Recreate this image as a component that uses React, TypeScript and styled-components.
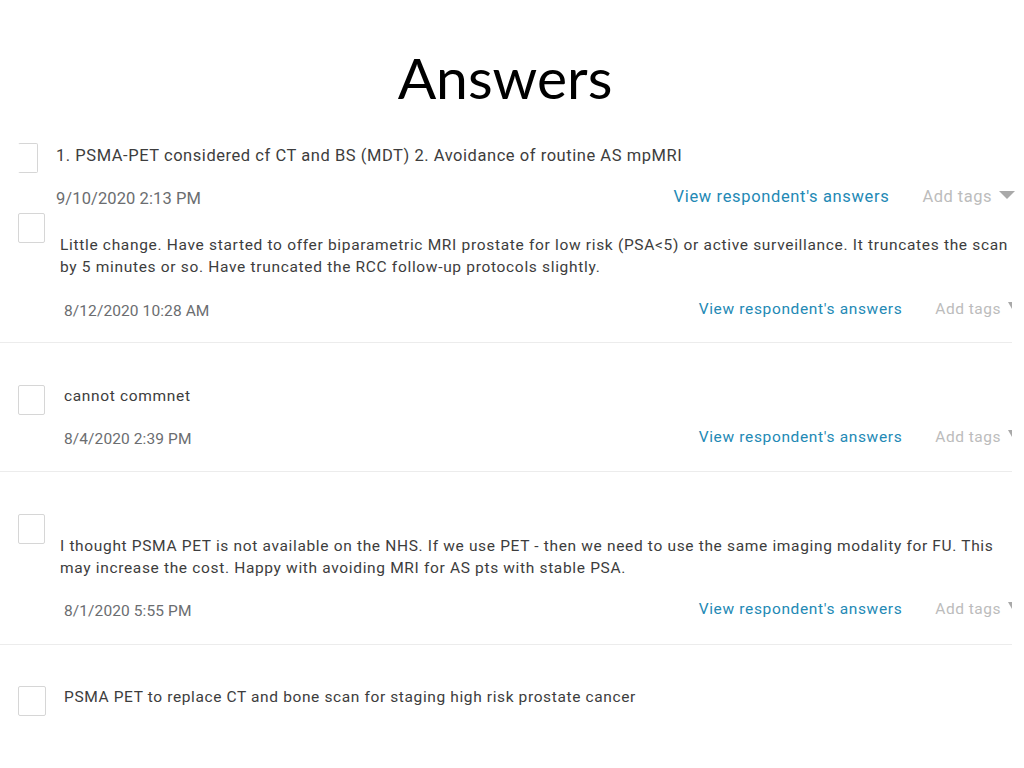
import styled, {createGlobalStyle} from 'styled-components';
import React from 'react';

const answers = [
    {
        lines: ['1. PSMA-PET considered cf CT and BS (MDT) 2. Avoidance of routine AS mpMRI'],
        date: '9/10/2020 2:13 PM',
        height: 80, divider: false, size: 16.5, track: 0.55, cut: true,
        boxTop: 13, boxW: 20, textTop: 15, textLeft: 18, footGap: 20, dateLeft: 0, right: 9,
    },
    {
        lines: [
            'Little change. Have started to offer biparametric MRI prostate for low risk (PSA<5) or active surveillance. It truncates the scan',
            'by 5 minutes or so. Have truncated the RCC follow-up protocols slightly.',
        ],
        date: '8/12/2020 10:28 AM',
        height: 133, divider: true, size: 15.5, track: 0.68, cut: false,
        boxTop: 3, boxW: 27, textTop: 24, textLeft: 15, footGap: 22, dateLeft: 4, right: 12,
    },
    {
        lines: ['cannot commnet'],
        date: '8/4/2020 2:39 PM',
        height: 129, divider: true, size: 15.5, track: 0.66, cut: false,
        boxTop: 42, boxW: 27, textTop: 42, textLeft: 19, footGap: 21, dateLeft: 0, right: 12,
    },
    {
        lines: [
            'I thought PSMA PET is not available on the NHS. If we use PET - then we need to use the same imaging modality for FU. This',
            'may increase the cost. Happy with avoiding MRI for AS pts with stable PSA.',
        ],
        date: '8/1/2020 5:55 PM',
        height: 173, divider: true, size: 15.5, track: 0.66, cut: false,
        boxTop: 42, boxW: 27, textTop: 63, textLeft: 15, footGap: 21, dateLeft: 4, right: 12,
    },
    {
        lines: ['PSMA PET to replace CT and bone scan for staging high risk prostate cancer'],
        date: '',
        height: 71, divider: false, size: 15.5, track: 0.62, cut: false,
        boxTop: 41, boxW: 28, textTop: 41, textLeft: 18, footGap: 0, dateLeft: 0, right: 12,
    },
];

export default function App() {
    return (
        <>
            <GlobalStyle/>
            <Slide>
                <Title>Answers</Title>
                {answers.map((a, i) => (
                    <Card key={i} $height={a.height} $divider={a.divider} $right={a.right}>
                        <Checkbox $top={a.boxTop} $w={a.boxW} $cut={a.cut}/>
                        <Body $top={a.textTop} $left={a.textLeft}>
                            <Text $size={a.size} $track={a.track}>
                                {a.lines.map((l) => <div key={l}>{l}</div>)}
                            </Text>
                            {a.date && (
                                <Footer $gap={a.footGap}>
                                    <Date $size={a.size} $left={a.dateLeft}>{a.date}</Date>
                                    <Actions>
                                        <ViewLink $size={a.size}>View respondent's answers</ViewLink>
                                        <Tags $size={a.size}>
                                            Add tags <Caret $small={i > 0}/>
                                        </Tags>
                                    </Actions>
                                </Footer>
                            )}
                        </Body>
                    </Card>
                ))}
            </Slide>
        </>
    )
}

const GlobalStyle = createGlobalStyle`
    html, body {
        margin: 0;
        padding: 0;
        background: #ffffff;
    }
    body {
        font-family: Roboto, "Liberation Sans", sans-serif;
    }
`;

const Slide = styled.div`
    width: 1024px;
    height: 768px;
    overflow: hidden;
    background: #ffffff;
    display: flex;
    flex-direction: column;
`;

const Title = styled.h1`
    margin: 0;
    height: 130px;
    padding-top: 45px;
    padding-right: 14px;
    box-sizing: border-box;
    text-align: center;
    font-family: Lato, "Open Sans", sans-serif;
    font-weight: 400;
    font-size: 57px;
    line-height: 64px;
    color: #000000;
`;

const Card = styled.div<{ $height: number; $divider: boolean; $right: number }>`
    display: flex;
    flex-shrink: 0;
    height: ${p => p.$height}px;
    box-sizing: border-box;
    overflow: hidden;
    padding-left: 18px;
    margin-right: ${p => p.$right}px;
    border-bottom: ${p => p.$divider ? '1px solid #ececec' : 'none'};
`;

const Checkbox = styled.div<{ $top: number; $w: number; $cut: boolean }>`
    flex-shrink: 0;
    width: ${p => p.$w}px;
    height: 30px;
    margin-top: ${p => p.$top}px;
    box-sizing: border-box;
    border: 1px solid #d6d6d6;
    border-left-color: ${p => p.$cut ? 'transparent' : '#d6d6d6'};
    border-radius: 2px;
    background: #ffffff;
`;

const Body = styled.div<{ $top: number; $left: number }>`
    flex: 1;
    min-width: 0;
    display: flex;
    flex-direction: column;
    padding-top: ${p => p.$top}px;
    margin-left: ${p => p.$left}px;
`;

const Text = styled.div<{ $size: number; $track: number }>`
    font-size: ${p => p.$size}px;
    letter-spacing: ${p => p.$track}px;
    line-height: 22px;
    color: #3d3d3d;
    white-space: nowrap;
`;

const Footer = styled.div<{ $gap: number }>`
    display: flex;
    align-items: center;
    margin-top: ${p => p.$gap}px;
    height: 22px;
`;

const Date = styled.div<{ $size: number; $left: number }>`
    margin-left: ${p => p.$left}px;
    font-size: ${p => p.$size}px;
    letter-spacing: 0.1px;
    color: #6b6d70;
`;

const Actions = styled.div`
    margin-left: auto;
    display: flex;
    align-items: center;
    gap: 33px;
    margin-top: -4px;
`;

const ViewLink = styled.span<{ $size: number }>`
    font-size: ${p => p.$size}px;
    letter-spacing: 0.65px;
    color: #2389b5;
`;

const Tags = styled.span<{ $size: number }>`
    display: flex;
    align-items: center;
    gap: 7px;
    font-size: ${p => p.$size}px;
    letter-spacing: 0.5px;
    color: #bcbcbc;
`;

const Caret = styled.span<{ $small: boolean }>`
    width: 0;
    height: 0;
    border-left: ${p => p.$small ? 4 : 8}px solid transparent;
    border-right: ${p => p.$small ? 0 : 8}px solid transparent;
    border-top: ${p => p.$small ? 7 : 8}px solid #a9a9a9;
    margin-top: ${p => p.$small ? -8 : -3}px;
`;
